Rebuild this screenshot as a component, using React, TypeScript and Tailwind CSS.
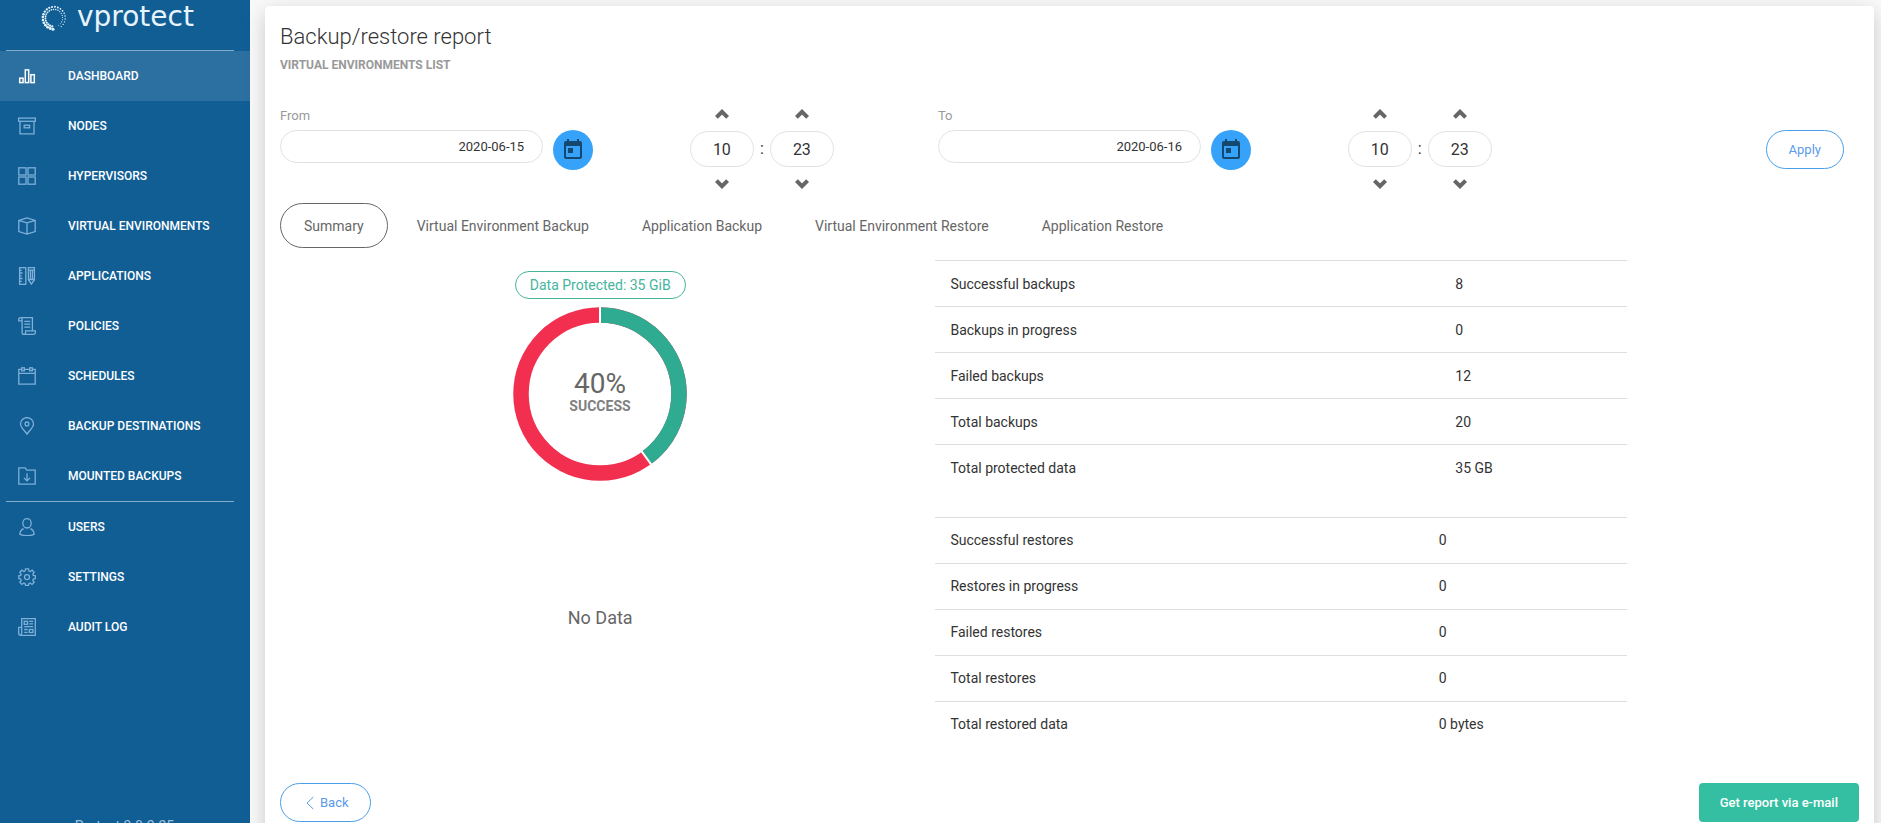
import React, { useState } from "react";
import { MdToday } from "react-icons/md";

type IconProps = { children: React.ReactNode };

const Icon = ({ children }: IconProps) => (
  <svg
    viewBox="0 0 18 18"
    className="size-[18px] shrink-0"
    fill="none"
    stroke="currentColor"
    strokeWidth="1.3"
    aria-hidden="true"
  >
    {children}
  </svg>
);

const icons = {
  dashboard: (
    <g strokeWidth="1.5">
      <rect x="1.7" y="11.2" width="3.4" height="4.4" />
      <rect x="7.3" y="2.9" width="3.4" height="12.7" />
      <rect x="12.9" y="7.7" width="3.4" height="7.9" />
    </g>
  ),
  nodes: (
    <>
      <rect x=".6" y="1.1" width="16.8" height="3.2" />
      <path d="M2 4.3v12.6h14V4.3" />
      <rect x="6.2" y="8.2" width="5.4" height="2.6" />
    </>
  ),
  hypervisors: (
    <>
      <rect x=".8" y=".8" width="7.2" height="7.2" />
      <rect x="10" y=".8" width="7.2" height="7.2" />
      <rect x=".8" y="10" width="7.2" height="7.2" />
      <rect x="10" y="10" width="7.2" height="7.2" />
    </>
  ),
  cube: <path d="M9 .9.8 3.4v11.2L9 17.1l8.2-2.5V3.4L9 .9ZM.8 3.4 9 5.9l8.2-2.5M9 5.9v11.2" />,
  applications: (
    <>
      <rect x="1.6" y=".7" width="6.2" height="16.6" />
      <path d="M1.6 3.3h2.2M1.6 6h3M1.6 8.8h2.2M1.6 11.5h3M1.6 14.3h2.2" />
      <path d="M10.4.7h6v12l-3 4.4-3-4.4V.7ZM10.4 3.2h6M12.4 3.2v9.3M14.4 3.2v9.3M10.4 12.5h6" />
    </>
  ),
  policies: (
    <>
      <path d="M2.6.7h11.8v13M2.6.7C1.4.7.7 1.5.7 2.6v1.3h3.4M2.6.7c1 0 1.5.8 1.5 1.9v12.8c0 1.2.7 1.9 1.8 1.9h9.6c1.2 0 1.9-.8 1.9-1.9v-1.6H7.600v1.600c0 1.200-.7 1.900-1.700 1.900" />
      <path d="M6.3 4.3h5.9M6.3 7.2h5.9M6.3 10.1h5.9" />
    </>
  ),
  schedules: (
    <>
      <path d="M3.7 2.3H.8v14.9h16.4V2.3h-2.9M6.3 2.3h5.4M.8 6.3h16.4" />
      <rect x="3.7" y=".8" width="2.6" height="3" />
      <rect x="11.7" y=".8" width="2.6" height="3" />
    </>
  ),
  pin: (
    <>
      <path d="M9 17.2C6.5 13.6 2.5 10 2.5 6.9a6.5 6.3 0 0 1 13 0C15.5 10 11.5 13.6 9 17.2Z" />
      <circle cx="9" cy="6.9" r="1.9" />
    </>
  ),
  mounted: (
    <>
      <path d="M.8 17.2V.9h6.4l1.6 2.3h8.4v14H.8Z" />
      <path d="M9 6.3v7.5M5.9 10.9 9 13.9l3.1-3" />
    </>
  ),
  users: (
    <>
      <ellipse cx="9" cy="5.3" rx="4.2" ry="4.7" />
      <path d="M5.6 10.6C3 11.8 1.9 13.5 1.9 16.3c4.3 1.5 9.9 1.5 14.2 0 0-2.8-1.1-4.5-3.7-5.7" />
    </>
  ),
  settings: (
    <>
      <path d="M7.5.8h3l.4 2.3 1.3.5 1.9-1.4 2.1 2.1-1.4 1.9.5 1.3 2.1.4v2.6l-2.1.6-.5 1.3 1.4 1.9-2.1 2.1-1.9-1.4-1.3.5-.4 1.9h-3l-.4-1.9-1.3-.5-1.9 1.4-2.1-2.1 1.4-1.9-.5-1.3-1.9-.6V7.9l1.9-.4.5-1.3L1.8 4.3l2.1-2.1 1.9 1.4 1.3-.5.4-2.3Z" />
      <circle cx="9" cy="9.1" r="2.5" />
    </>
  ),
  audit: (
    <>
      <path d="M3.4 9.3H.7v5.9c0 1.3.8 2.1 2 2.1h14.600V.7H3.700v14.400c0 1.300-.3 1.900-1.300 2.200" />
      <rect x="6.2" y="3.3" width="3.4" height="3" />
      <rect x="11.3" y="11.5" width="3.6" height="3" />
      <path d="M11.3 3.3h3.8M11.3 5.9h3.8M6.2 8.7h9M6.2 11.5h3.4M6.2 14.3h3.4" />
    </>
  ),
};

const mainNav = [
  { label: "DASHBOARD", icon: icons.dashboard, active: true },
  { label: "NODES", icon: icons.nodes },
  { label: "HYPERVISORS", icon: icons.hypervisors },
  { label: "VIRTUAL ENVIRONMENTS", icon: icons.cube },
  { label: "APPLICATIONS", icon: icons.applications },
  { label: "POLICIES", icon: icons.policies },
  { label: "SCHEDULES", icon: icons.schedules },
  { label: "BACKUP DESTINATIONS", icon: icons.pin },
  { label: "MOUNTED BACKUPS", icon: icons.mounted },
];

const adminNav = [
  { label: "USERS", icon: icons.users },
  { label: "SETTINGS", icon: icons.settings },
  { label: "AUDIT LOG", icon: icons.audit },
];

const NavList = ({ items }: { items: { label: string; icon: React.ReactNode; active?: boolean }[] }) => (
  <ul>
    {items.map(({ label, icon, active }) => (
      <li key={label}>
        <a
          href="#"
          className={
            active
              ? "flex h-[50px] items-center gap-8 bg-[#2c6fa1] pl-[18px] text-xs font-medium text-white"
              : "flex h-[50px] items-center gap-8 pl-[18px] text-xs font-medium text-white"
          }
        >
          <span className={active ? "text-white" : "text-[#7fb0d8]"}>
            <Icon>{icon}</Icon>
          </span>
          {label}
        </a>
      </li>
    ))}
  </ul>
);

const LogoMark = () => {
  const dots = Array.from({ length: 22 }, (_, i) => {
    const angle = ((95 + i * 15) * Math.PI) / 180;
    const size = Math.max(0.8, 1.9 - i * 0.055);
    return { angle, size };
  });
  return (
    <svg viewBox="0 0 26 26" className="size-[26px]" fill="#e8f4fc" aria-hidden="true">
      {dots.map(({ angle, size }, i) => (
        <g key={i}>
          <circle cx={13 + 11.2 * Math.cos(angle)} cy={13 + 11.2 * Math.sin(angle)} r={size * 0.8} />
          <circle cx={13 + 8.6 * Math.cos(angle + 0.12)} cy={13 + 8.6 * Math.sin(angle + 0.12)} r={size * 0.6} />
        </g>
      ))}
    </svg>
  );
};

const Sidebar = () => (
  <aside className="flex w-[250px] shrink-0 flex-col bg-[#115e95]">
    <div className="flex h-[50px] shrink-0 items-start gap-2.5 pt-[5px] pl-[41px]">
      <LogoMark />
      <span className="font-['DejaVu_Sans',sans-serif] text-[28px] leading-6 text-[#e8f4fc]">vprotect</span>
    </div>
    <nav>
      <hr className="mr-4 ml-1.5 border-[#84abc9]" />
      <NavList items={mainNav} />
      <hr className="mr-4 ml-1.5 border-[#84abc9]" />
      <NavList items={adminNav} />
    </nav>
    <p className="mt-[164px] pl-[68px] text-sm leading-5 whitespace-nowrap text-[#9dc0dc]">vProtect 3.9.2-25</p>
  </aside>
);

const DateField = ({ label, initial }: { label: string; initial: string }) => {
  const id = `date-${label.toLowerCase()}`;
  return (
    <div className="pt-[17px]">
      <label htmlFor={id} className="block text-[13px] leading-5 text-[#999]">
        {label}
      </label>
      <div className="mt-1 flex gap-2.5">
        <input
          id={id}
          defaultValue={initial}
          className="h-[33px] w-[64.2%] rounded-full border border-[#e2e2e2] pr-[18px] text-right text-[13px] text-[#333]"
        />
        <button
          type="button"
          aria-label="Open calendar"
          className="flex size-10 shrink-0 items-center justify-center rounded-full bg-[#36a2f9] text-[#15486f]"
        >
          <MdToday size={24} />
        </button>
      </div>
    </div>
  );
};

const Chevron = ({ down }: { down?: boolean }) => (
  <svg viewBox="0 0 14 10" className="h-2.5 w-3.5" fill="none" stroke="#666" strokeWidth="4" aria-hidden="true">
    <path d={down ? "M1.4 1.6 7 7.2l5.6-5.6" : "M1.4 8.4 7 2.8l5.6 5.6"} />
  </svg>
);

const Spinner = ({ name, initial, max }: { name: string; initial: number; max: number }) => {
  const [value, setValue] = useState(initial);
  const step = (delta: number) => setValue((v) => (v + delta + max) % max);
  return (
    <div className="flex w-16 flex-col items-center">
      <button type="button" aria-label={`Increase ${name}`} onClick={() => step(1)} className="flex h-[34px] items-center px-3">
        <Chevron />
      </button>
      <input
        aria-label={name}
        value={value}
        readOnly
        className="h-9 w-16 rounded-full border border-[#e2e2e2] text-center text-base text-[#333]"
      />
      <button type="button" aria-label={`Decrease ${name}`} onClick={() => step(-1)} className="flex h-[34px] items-center px-3">
        <Chevron down />
      </button>
    </div>
  );
};

const DateTime = ({ label, date }: { label: string; date: string }) => (
  <div className="grid grid-cols-[62.3%_1fr]">
    <DateField label={label} initial={date} />
    <div className="flex items-center pt-2">
      <Spinner name={`${label} hour`} initial={10} max={24} />
      <span className="w-4 text-center text-base text-[#333]">:</span>
      <Spinner name={`${label} minute`} initial={23} max={60} />
    </div>
  </div>
);

const tabs = [
  "Summary",
  "Virtual Environment Backup",
  "Application Backup",
  "Virtual Environment Restore",
  "Application Restore",
];

const Donut = () => (
  <svg viewBox="0 0 174 174" className="size-[174px]" role="img" aria-label="40% success">
    <g fill="none" strokeWidth="15.5" transform="rotate(-90 87 87)">
      <circle cx="87" cy="87" r="79" stroke="#f22f4f" />
      <circle cx="87" cy="87" r="79" stroke="#2fab91" pathLength="100" strokeDasharray="40 60" />
    </g>
    <path d="M87 87V0M87 87l51.800 71.300" stroke="#fff" strokeWidth="2" />
    <circle cx="87" cy="87" r="70" fill="#fff" />
    <text x="87" y="86" textAnchor="middle" fontSize="28" fill="#666">
      40%
    </text>
    <text x="87" y="104" textAnchor="middle" fontSize="14" fontWeight="700" fill="#808080">
      SUCCESS
    </text>
  </svg>
);

const StatsTable = ({ rows, wide }: { rows: [string, string][]; wide?: boolean }) => (
  <table className="w-full table-fixed text-left text-sm text-[#333]">
    <tbody>
      {rows.map(([name, value]) => (
        <tr key={name} className="h-[46px] border-t border-[#dedede]">
          <th scope="row" className={wide ? "w-[73%] pl-[15px] font-normal" : "w-[70.6%] pl-[15px] font-normal"}>
            {name}
          </th>
          <td className="pl-[15px]">{value}</td>
        </tr>
      ))}
    </tbody>
  </table>
);

export default function App() {
  const [active, setActive] = useState("Summary");
  return (
    <div className="flex h-screen overflow-hidden bg-[#f9f9f9] font-[Roboto,sans-serif]">
      <Sidebar />
      <main className="min-w-0 flex-1 pt-1.5 pr-[7px] pl-[15px]">
        <section className="min-h-full rounded bg-white px-[15px] pb-10 shadow-[0_6px_20px_rgba(0,0,0,0.2)]">
          <h1 className="pt-[15px] text-[22px] leading-8 font-light text-[#333]">Backup/restore report</h1>
          <p className="mt-0.5 text-xs leading-5 font-bold text-[#999]">VIRTUAL ENVIRONMENTS LIST</p>

          <form className="mt-3.5 grid grid-cols-[5fr_5fr_2fr]" onSubmit={(e) => e.preventDefault()}>
            <DateTime label="From" date="2020-06-15" />
            <DateTime label="To" date="2020-06-16" />
            <div className="flex items-start justify-end pt-[41px] pr-[15px]">
              <button type="submit" className="h-[39px] rounded-full border border-[#4a9fe8] px-[22px] text-[13px] text-[#5a9bea]">
                Apply
              </button>
            </div>
          </form>

          <div role="tablist" className="mt-0.5 flex gap-[5px]">
            {tabs.map((tab) => (
              <button
                key={tab}
                type="button"
                role="tab"
                aria-selected={tab === active}
                onClick={() => setActive(tab)}
                className={
                  tab === active
                    ? "h-[45px] rounded-full border border-[#666] px-[23px] text-sm text-[#666]"
                    : "h-[45px] rounded-full border border-transparent px-[23px] text-sm text-[#666]"
                }
              >
                {tab}
              </button>
            ))}
          </div>

          <div className="-mx-[15px] mt-3 grid grid-cols-[5fr_7fr]">
            <div className="flex flex-col items-center pt-[11px]">
              <p className="rounded-full border border-[#45b59d] px-3.5 text-sm leading-[26px] text-[#45b59d]">
                Data Protected: 35 GiB
              </p>
              <div className="mt-2">
                <Donut />
              </div>
              <p className="mt-[123px] text-lg leading-7 text-[#666]">No Data</p>
            </div>
            <div className="flex w-[73.7%] flex-col gap-[26px]">
              <StatsTable
                wide
                rows={[
                  ["Successful backups", "8"],
                  ["Backups in progress", "0"],
                  ["Failed backups", "12"],
                  ["Total backups", "20"],
                  ["Total protected data", "35 GB"],
                ]}
              />
              <StatsTable
                rows={[
                  ["Successful restores", "0"],
                  ["Restores in progress", "0"],
                  ["Failed restores", "0"],
                  ["Total restores", "0"],
                  ["Total restored data", "0 bytes"],
                ]}
              />
            </div>
          </div>

          <div className="mt-9 flex justify-between">
            <button
              type="button"
              className="flex h-[39px] items-center gap-1.5 rounded-full border border-[#4a9fe8] pr-[21px] pl-[25px] text-[13px] text-[#5a9bea]"
            >
              <svg viewBox="0 0 8 14" className="h-3.5 w-2" fill="none" stroke="currentColor" aria-hidden="true">
                <path d="M7.3 1 1 7l6.3 6" />
              </svg>
              Back
            </button>
            <button type="button" className="h-[39px] rounded bg-[#35bfa2] px-[21px] text-[13px] font-medium text-white">
              Get report via e-mail
            </button>
          </div>
        </section>
      </main>
    </div>
  );
}
